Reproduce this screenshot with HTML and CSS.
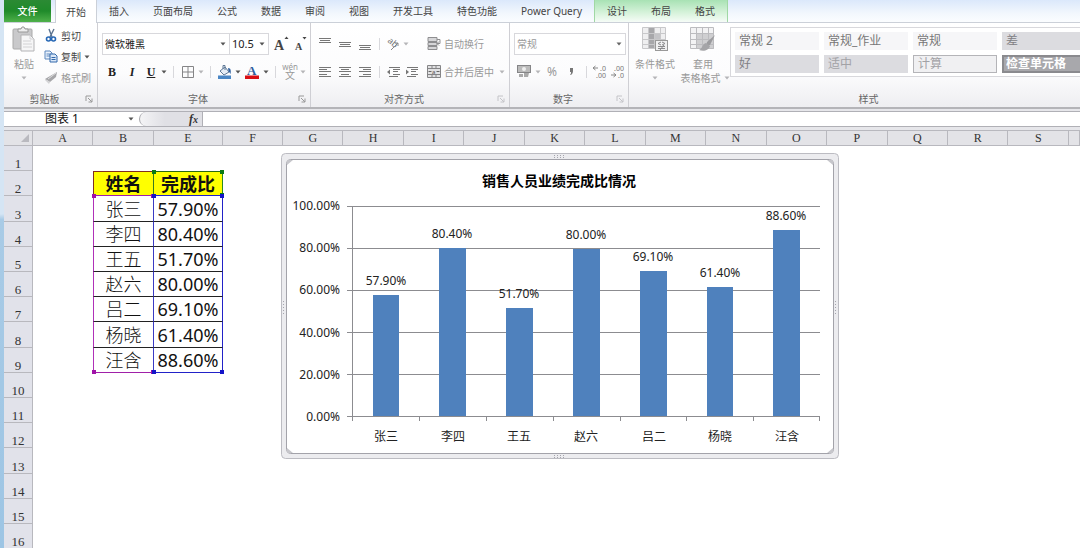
FILE: index.html
```html
<!DOCTYPE html>
<html lang="zh-CN">
<head>
<meta charset="utf-8">
<title>销售人员业绩完成比情况</title>
<link rel="stylesheet" href="styles.css">
</head>
<body>
<svg class="defs" aria-hidden="true">
  <symbol id="down" viewBox="0 0 6 4"><path d="M0.5 0.5h5L3 3.5z" fill="currentColor"/></symbol>
  <symbol id="launch" viewBox="0 0 8 8"><path d="M1 6V1h5" fill="none" stroke="currentColor"/><path d="M3 3l4 4M7 3.5V7H3.5" fill="none" stroke="currentColor"/></symbol>
</svg>
<div class="window">
  <nav class="tabs">
    <button class="tab file">文件</button>
    <button class="tab active">开始</button>
    <button class="tab">插入</button>
    <button class="tab">页面布局</button>
    <button class="tab">公式</button>
    <button class="tab">数据</button>
    <button class="tab">审阅</button>
    <button class="tab">视图</button>
    <button class="tab">开发工具</button>
    <button class="tab">特色功能</button>
    <button class="tab">Power Query</button>
    <div class="context">
      <button class="tab">设计</button>
      <button class="tab">布局</button>
      <button class="tab">格式</button>
    </div>
  </nav>

  <div class="ribbon">
    <section class="group clipboard">
      <div class="body">
        <button class="big off">
          <svg width="24" height="25" viewBox="0 0 24 25"><rect x="1" y="2" width="19" height="20" rx="1" fill="#c9c9cb" stroke="#aaa"/><path d="M6 5V2h3l1-2h2l1 2h3v3z" fill="#ededee" stroke="#999"/><path d="M9 8h9l4 4v12H9z" fill="#f6f6f7" stroke="#b3b3b5"/><path d="M18 8v4h4M11 14h8M11 17h9M11 20h9" fill="none" stroke="#d2d2d4"/></svg>
          <span>粘贴</span>
          <svg class="arr"><use href="#down"/></svg>
        </button>
        <div class="stack">
          <button class="line"><svg width="14" height="13" viewBox="0 0 14 13"><path d="M5 0l3 8M10 0L6 8" stroke="#5b7390" stroke-width="1.4"/><circle cx="4.500" cy="10" r="2" fill="none" stroke="#2667b5" stroke-width="1.600"/><circle cx="9.500" cy="10" r="2" fill="none" stroke="#2667b5" stroke-width="1.600"/></svg>剪切</button>
          <button class="line"><svg width="14" height="13" viewBox="0 0 14 13"><path d="M1 1h5l2 2v6H1z" fill="#eaf2fc" stroke="#5b86bd"/><path d="M2.500 4h4M2.500 6h4" stroke="#5b86bd"/><path d="M6 4h5l2 2v6H6z" fill="#dbe8f8" stroke="#3268ab"/><path d="M7.500 7.500h4M7.500 9.500h4" stroke="#3268ab"/></svg>复制<svg class="arr"><use href="#down"/></svg></button>
          <button class="line off"><svg width="14" height="13" viewBox="0 0 14 13"><path d="M13 1l-1 5-6 5-5-3z" fill="#a6a6a9"/><path d="M1 8l5 3-1 2-4-4z" fill="#d2d2d4"/><path d="M4 8l8-6" stroke="#dedee0"/></svg>格式刷</button>
        </div>
      </div>
      <footer><span>剪贴板</span><svg class="corner"><use href="#launch"/></svg></footer>
    </section>

    <section class="group font">
      <div class="body rows">
        <div class="row">
          <label class="pick family"><select aria-label="字体"><option>微软雅黑</option></select><svg class="arr"><use href="#down"/></svg></label>
          <label class="pick size"><select aria-label="字号"><option>10.5</option></select><svg class="arr"><use href="#down"/></svg></label>
          <button class="w18 grow" aria-label="增大字号"><svg width="16" height="16" viewBox="0 0 16 16"><text x="0" y="14" class="ga">A</text><path d="M10.500 3h4L12.500 0.500z" fill="#444"/></svg></button>
          <button class="w18" aria-label="减小字号"><svg width="16" height="16" viewBox="0 0 16 16"><text x="3" y="14" class="gb">A</text><path d="M10.500 1h4L12.500 3.500z" fill="#444"/></svg></button>
        </div>
        <div class="row">
          <button class="w20 serif"><b>B</b></button>
          <button class="w20 serif"><b><i>I</i></b></button>
          <button class="w18 serif"><b><u>U</u></b></button>
          <button class="w8" aria-label="下划线选项"><svg class="arr"><use href="#down"/></svg></button>
          <i class="sep"></i>
          <button class="w18" aria-label="边框"><svg width="12" height="12" viewBox="0 0 12 12"><path d="M.5.5h11v11H.5zM6 .5v11M.5 6h11" fill="none" stroke="#858587"/></svg></button>
          <button class="w8 off" aria-label="边框选项"><svg class="arr"><use href="#down"/></svg></button>
          <i class="sep"></i>
          <button class="w18" aria-label="填充颜色"><svg width="14" height="14" viewBox="0 0 14 14"><path d="M2 6l5-4 4 5-5 3z" fill="#e6edf6" stroke="#5f7896"/><path d="M5 4V0.500h2V5" fill="none" stroke="#5f7896"/><path d="M10 3c3 0 3 3 2.500 6L10.500 6z" fill="#2d5f9f"/><rect y="10.500" width="13" height="3.500" fill="#4a86c5"/></svg></button>
          <button class="w8" aria-label="填充选项"><svg class="arr"><use href="#down"/></svg></button>
          <button class="w20" aria-label="字体颜色"><svg width="14" height="14" viewBox="0 0 14 14"><text x="2" y="10" class="fc">A</text><rect y="10.500" width="14" height="3.500" fill="#d90f14"/></svg></button>
          <button class="w8" aria-label="字体颜色选项"><svg class="arr"><use href="#down"/></svg></button>
          <i class="sep"></i>
          <button class="w18 wen off" aria-label="拼音"><span class="py">wén</span><span>文</span></button>
          <button class="w8 off" aria-label="拼音选项"><svg class="arr"><use href="#down"/></svg></button>
        </div>
      </div>
      <footer><span>字体</span><svg class="corner"><use href="#launch"/></svg></footer>
    </section>

    <section class="group align">
      <div class="body">
        <div class="rows">
          <div class="row">
            <button class="w20" aria-label="顶端对齐"><svg width="12" height="12" viewBox="0 0 12 12"><path d="M0 .5h12M1 2.500h10M0 4.500h12" stroke="#777"/></svg></button>
            <button class="w20" aria-label="垂直居中"><svg width="12" height="12" viewBox="0 0 12 12"><path d="M0 4.500h12M1 6.500h10M0 8.500h12" stroke="#777"/></svg></button>
            <button class="w20" aria-label="底端对齐"><svg width="12" height="12" viewBox="0 0 12 12"><path d="M0 7.500h12M1 9.500h10M0 11.500h12" stroke="#777"/></svg></button>
            <i class="sep tight"></i>
            <button class="w18 off" aria-label="方向"><svg width="14" height="12" viewBox="0 0 14 12"><text x="0" y="6" class="ab" transform="rotate(40 4 6)">ab</text><path d="M5 12l7-7M12 8V5H9" fill="none" stroke="#888"/></svg></button>
            <button class="w8 off" aria-label="方向选项"><svg class="arr"><use href="#down"/></svg></button>
          </div>
          <div class="row">
            <button class="w20" aria-label="左对齐"><svg width="12" height="12" viewBox="0 0 12 12"><path d="M0 1.500h12M0 3.500h8M0 5.500h12M0 8.500h8M0 10.500h12" stroke="#777"/></svg></button>
            <button class="w20" aria-label="居中"><svg width="12" height="12" viewBox="0 0 12 12"><path d="M0 1.500h12M2 3.500h8M0 5.500h12M2 8.500h8M0 10.500h12" stroke="#777"/></svg></button>
            <button class="w20" aria-label="右对齐"><svg width="12" height="12" viewBox="0 0 12 12"><path d="M0 1.500h12M4 3.500h8M0 5.500h12M4 8.500h8M0 10.500h12" stroke="#777"/></svg></button>
            <i class="sep tight"></i>
            <button class="w18" aria-label="减少缩进"><svg width="13" height="12" viewBox="0 0 13 12"><path d="M2 1.500h11M6 3.500h7M6 5.500h5M6 8.500h7M2 10.500h9" stroke="#777"/><path d="M0 6l3-2.500v5z" fill="#777"/></svg></button>
            <button class="w18" aria-label="增加缩进"><svg width="13" height="12" viewBox="0 0 13 12"><path d="M2 1.500h11M6 3.500h7M6 5.500h5M6 8.500h7M2 10.500h9" stroke="#777"/><path d="M4 6L1 3.500v5z" fill="#777"/></svg></button>
          </div>
        </div>
        <div class="rows wraps">
          <button class="line row off"><svg width="14" height="13" viewBox="0 0 14 13"><path d="M1 .5h9v4H1zM1 5.500h9v3H1zM1 9.500h9v3H1z" fill="#d6d6d8" stroke="#8e8e90"/><path d="M10 2.500h3v4h-3M12 4.500l-2 2 2 2" fill="none" stroke="#8e8e90"/></svg>自动换行</button>
          <button class="line row off"><svg width="14" height="13" viewBox="0 0 14 13"><path d="M.5.5h13v12H.5zM.5 3.500h13M.5 9.500h13M5 .5v3M9 .5v3M5 9.500v3M9 9.500v3" fill="#e1e1e3" stroke="#858587"/><path d="M1.500 6.500h3M9.500 6.500h3" stroke="#666"/><text x="5" y="9" class="tiny">a</text></svg>合并后居中<svg class="arr"><use href="#down"/></svg></button>
        </div>
      </div>
      <footer><span>对齐方式</span><svg class="corner off"><use href="#launch"/></svg></footer>
    </section>

    <section class="group number">
      <div class="body rows">
        <div class="row">
          <label class="pick fmt off"><select aria-label="数字格式"><option>常规</option></select><svg class="arr"><use href="#down"/></svg></label>
        </div>
        <div class="row">
          <button class="w20" aria-label="会计数字格式"><svg width="14" height="13" viewBox="0 0 14 13"><rect x=".5" y=".5" width="13" height="7" fill="#bbb" stroke="#858587"/><circle cx="7" cy="4" r="2" fill="#eee"/><path d="M7 8h5l-1 4H7zM2 9h4v3H2z" fill="#aaa"/></svg></button>
          <button class="w8 off" aria-label="货币选项"><svg class="arr"><use href="#down"/></svg></button>
          <button class="w20 pct off">%</button>
          <button class="w20 off" aria-label="千位分隔样式"><svg width="4" height="7" viewBox="0 0 4 7"><path d="M0 0h3v3c0 2-1 3-2 4H0c1-1 1-2 1-3H0z" fill="#777"/></svg></button>
          <i class="sep tight"></i>
          <button class="w18" aria-label="增加小数位数"><svg width="14" height="13" viewBox="0 0 14 13"><path d="M0 3h5M2.500 1L0 3l2.500 2" fill="none" stroke="#888"/><text x="7" y="6" class="dec">.0</text><text x="3" y="13" class="dec">.00</text></svg></button>
          <button class="w18" aria-label="减少小数位数"><svg width="14" height="13" viewBox="0 0 14 13"><text x="3" y="6" class="dec">.00</text><path d="M0 10h5M2.500 8L5 10l-2.500 2" fill="none" stroke="#888"/><text x="7" y="13" class="dec">.0</text></svg></button>
        </div>
      </div>
      <footer><span>数字</span><svg class="corner off"><use href="#launch"/></svg></footer>
    </section>

    <section class="group styles">
      <div class="body">
        <button class="big off">
          <svg width="26" height="25" viewBox="0 0 26 25"><path d="M.5.500h23v21H.5z" fill="#efeff0"/><path d="M6 0h7v22H6z" fill="#a7a7aa"/><path d="M13 6h5v12h-5z" fill="#c4c4c7"/><path d="M.5.500h23v21H.5zM6.500 0v22M12.500 0v22M18.500 0v22M0 6.500h23M0 12.500h23M0 17.500h23" fill="none" stroke="#c8c8ca"/><rect x="13.500" y="13.500" width="12" height="10" fill="#f0f0f1" stroke="#999"/><path d="M19 15l-3 1.500 3 1.500M20 15l3 1.500-3 1.500M16 19.500h7M16 21.500h7M22 18l-4 5" fill="none" stroke="#8b8b8d"/></svg>
          <span>条件格式</span>
          <svg class="arr"><use href="#down"/></svg>
        </button>
        <button class="big off">
          <svg width="26" height="25" viewBox="0 0 26 25"><path d="M.5.500h23v21H.5z" fill="#f3f3f4"/><path d="M6 6h18v16H6z" fill="#cfcfd1"/><path d="M.5.500h23v21H.5zM6.500 0v22M12.500 0v22M18.500 0v22M0 6.500h23M0 12.500h23M0 17.500h23" fill="none" stroke="#bcbcbf"/><path d="M25 8l-5 10-4 1 1-4z" fill="#9c9c9f"/><path d="M16 16c-4 1-3 5-7 7 5 2 10 0 11-4z" fill="#a5a5a8"/></svg>
          <span>套用</span>
          <span class="two">表格格式<svg class="arr"><use href="#down"/></svg></span>
        </button>
        <div class="gallery">
          <button>常规 2</button><button>常规_作业</button><button>常规</button><button class="dim">差</button>
          <button class="dim">好</button><button class="dim pale">适中</button><button class="boxed pale">计算</button><button class="check">检查单元格</button>
        </div>
      </div>
      <footer><span>样式</span></footer>
    </section>
  </div>

  <div class="formula">
    <label class="namebox"><input value="图表 1" aria-label="名称框"><svg class="arr"><use href="#down"/></svg></label>
    <div class="fxbar"><div class="pill"><button class="fx" aria-label="插入函数">f<small>x</small></button></div></div>
    <input class="entry" aria-label="编辑栏">
  </div>

  <main class="sheet">
    <table>
      <colgroup><col class="c-head"><col class="c-a"><col class="c-b"><col class="c-e"><col class="c-a"><col><col><col><col><col><col><col><col><col><col><col><col><col><col class="c-end"></colgroup>
      <thead>
        <tr><th class="all"><svg width="8" height="8" viewBox="0 0 8 8"><path d="M8 0v8H0z" fill="#b9b9bf"/></svg></th><th>A</th><th>B</th><th>E</th><th>F</th><th>G</th><th>H</th><th>I</th><th>J</th><th>K</th><th>L</th><th>M</th><th>N</th><th>O</th><th>P</th><th>Q</th><th>R</th><th>S</th><th></th></tr>
      </thead>
      <tbody>
        <tr><th>1</th><td colspan="18"></td></tr>
        <tr><th>2</th><td></td><td class="name head">姓名</td><td class="rate head">完成比<i class="h tl green"></i><i class="h tr green"></i><i class="h br green"></i></td><td colspan="15"></td></tr>
        <tr class="tall"><th>3</th><td></td><td class="name">张三<i class="h tl purple"></i><i class="h tr purple"></i></td><td class="rate">57.90%<i class="h tl"></i><i class="h tr"></i></td><td colspan="15"></td></tr>
        <tr><th>4</th><td></td><td class="name">李四</td><td class="rate">80.40%</td><td colspan="15"></td></tr>
        <tr><th>5</th><td></td><td class="name">王五</td><td class="rate">51.70%</td><td colspan="15"></td></tr>
        <tr><th>6</th><td></td><td class="name">赵六</td><td class="rate">80.00%</td><td colspan="15"></td></tr>
        <tr><th>7</th><td></td><td class="name">吕二</td><td class="rate">69.10%</td><td colspan="15"></td></tr>
        <tr class="tall"><th>8</th><td></td><td class="name">杨晓</td><td class="rate">61.40%</td><td colspan="15"></td></tr>
        <tr class="last"><th>9</th><td></td><td class="name">汪含<i class="h bl purple"></i><i class="h br purple"></i></td><td class="rate">88.60%<i class="h bl"></i><i class="h br"></i></td><td colspan="15"></td></tr>
        <tr><th>10</th><td colspan="18"></td></tr>
        <tr><th>11</th><td colspan="18"></td></tr>
        <tr><th>12</th><td colspan="18"></td></tr>
        <tr class="tall"><th>13</th><td colspan="18"></td></tr>
        <tr><th>14</th><td colspan="18"></td></tr>
        <tr><th>15</th><td colspan="18"></td></tr>
        <tr><th>16</th><td colspan="18"></td></tr>
      </tbody>
    </table>

    <figure class="chart">
      <svg width="558" height="306" viewBox="0 0 558 306" role="img" aria-label="销售人员业绩完成比情况">
        <rect x=".5" y=".5" width="557" height="305" rx="4" fill="#ececef" stroke="#bcbcc2"/>
        <rect x="5.500" y="6.500" width="547" height="294" rx="4" fill="#fff" stroke="#a3a3aa"/>
        <path d="M6 12l6-5H6zM552 12l-6-5h6zM6 295l6 5H6zM552 295l-6 5h6z" fill="#c6c6cb"/>
        <g stroke="#a5a5ad" stroke-dasharray="1 2"><path d="M273 2.500h12M273 4.500h12M273 302.500h12M273 304.500h12M2.500 148v14M554.500 148v14"/></g>
        <text class="title" x="278" y="33">销售人员业绩完成比情况</text>
        <g class="grid"><path d="M66 53.500h473M66 95.500h473M66 137.500h473M66 179.500h473M66 221.500h473"/></g>
        <g class="ylab"><text x="59" y="57">100.00%</text><text x="59" y="99">80.00%</text><text x="59" y="141">60.00%</text><text x="59" y="184">40.00%</text><text x="59" y="226">20.00%</text><text x="59" y="268">0.00%</text></g>
        <g fill="#4f81bd"><rect x="92" y="142" width="26" height="122"/><rect x="158" y="95" width="27" height="169"/><rect x="225" y="155" width="27" height="109"/><rect x="292" y="96" width="27" height="168"/><rect x="359" y="118" width="27" height="146"/><rect x="426" y="134" width="26" height="130"/><rect x="492" y="77" width="27" height="187"/></g>
        <g class="grid"><path d="M66 263.500h473M71.500 53v215M138.500 264v4M205.500 264v4M272.500 264v4M339.500 264v4M405.500 264v4M472.500 264v4M538.500 264v4"/></g>
        <g class="lab"><text x="105" y="132">57.90%</text><text x="171" y="85">80.40%</text><text x="238" y="145">51.70%</text><text x="305" y="86">80.00%</text><text x="372" y="108">69.10%</text><text x="439" y="124">61.40%</text><text x="505" y="67">88.60%</text></g>
        <g class="lab"><text x="105" y="288">张三</text><text x="172" y="288">李四</text><text x="238" y="288">王五</text><text x="305" y="288">赵六</text><text x="373" y="288">吕二</text><text x="439" y="288">杨晓</text><text x="506" y="288">汪含</text></g>
      </svg>
    </figure>
  </main>
</div>
</body>
</html>
```
FILE: styles.css
```css
* { box-sizing: border-box; }
html, body { height: 100%; }
body {
  margin: 0;
  overflow: hidden;
  font: 10px/14px "Noto Sans", "Noto Sans CJK SC", sans-serif;
  color: #444;
  background: #fff;
}
button, select, input { font: inherit; color: inherit; border: 0; padding: 0; margin: 0; background: none; }
svg { display: block; flex: none; overflow: visible; }
.defs { position: absolute; width: 0; height: 0; }
.arr { width: 6px; height: 4px; color: #555; }
.off { color: #999; }
.off .arr { color: #b5b5b8; }

.window {
  min-height: 100%;
  display: flex;
  flex-direction: column;
  border-left: 4px solid;
  border-image: linear-gradient(#d5e5f4 0 39%, #a9cbe6 40%, #9dc5e4) 1;
}

/* tabs */
.tabs {
  display: flex;
  height: 23px;
  background: linear-gradient(#dbe8fb, #f2f7fd 60%, #fbfdff);
  border-bottom: 1px solid #cbd0d8;
}
.tab { padding: 0 12px; white-space: nowrap; height: 22px; }
.file { color: #fff; background: linear-gradient(#2b8a34, #1f8a2a 50%, #4fb14a); width: 47px; font-weight: 500; }
.active {
  width: 42px;
  height: 23px;
  margin-left: 4px;
  padding: 0;
  background: #fff;
  border: 1px solid #cbd0d8;
  border-width: 0 1px;
}
.context {
  display: flex;
  background: linear-gradient(#a8e2b4, #d8f3dc 60%, #f6fcf7);
  border: 1px solid #a0d8a4;
  border-width: 0 1px;
}
.context .tab { padding: 0 12px; }

/* ribbon */
.ribbon {
  display: flex;
  height: 86px;
  background: linear-gradient(#fff, #fcfcfd 60%, #eeeef1);
  border-bottom: 2px solid #b4b4b8;
  overflow: hidden;
}
.group { display: flex; flex-direction: column; flex: none; border-right: 1px solid #cfcfd4; }
.body { flex: 1; display: flex; }
.group footer { display: flex; height: 17px; align-items: center; color: #666; padding-right: 4px; }
.group footer span { flex: 1; text-align: center; }
.corner { width: 8px; height: 8px; color: #999; }
.corner.off { color: #c4c4c8; }
.clipboard { width: 94px; }
.font { width: 213px; }
.align { width: 199px; }
.number { width: 119px; }
.styles { flex: 1; border: 0; min-width: 0; }

.big { display: flex; flex-direction: column; align-items: center; padding-top: 4px; }
.big span { margin-top: 5px; white-space: nowrap; }
.big > .arr { margin-top: 5px; }
.big .two { display: flex; align-items: center; gap: 3px; margin: 0; padding-left: 4px; }
.clipboard .big { width: 40px; }
.stack { display: flex; flex-direction: column; padding-top: 2px; }
.line { display: flex; align-items: center; gap: 3px; height: 21px; white-space: nowrap; }

.rows { display: flex; flex-direction: column; gap: 7px; padding-top: 10px; }
.row { display: flex; align-items: center; height: 21px; }
.font .body { padding-left: 4px; }
.row button { display: flex; align-items: center; justify-content: center; height: 20px; }
.w20 { width: 20px; }
.w18 { width: 18px; }
.w8 { width: 8px; }
.sep { width: 1px; height: 12px; margin: 0 5px; background: #d8d8dc; }
.sep.tight { margin: 0 4px; }
.pick { display: flex; align-items: center; height: 22px; border: 1px solid #d8d8dc; background: #fff; padding-right: 3px; }
.pick select { appearance: none; flex: 1; min-width: 0; height: 20px; padding-left: 2px; outline: 0; }
.pick .arr { pointer-events: none; }
.family { width: 128px; color: #222; }
.size { width: 40px; color: #222; margin-left: -1px; }
.size select { font-size: 11px; }
.grow { margin-left: 4px; }
.serif { font: 12px/14px "Liberation Serif", serif; color: #222; }
.ga, .gb, .fc { font-family: "Liberation Serif", serif; font-weight: bold; fill: #444; }
.ga { font-size: 14px; }
.gb { font-size: 10px; }
.fc { font-size: 13px; fill: #2f5f9f; }
.row .wen { flex-direction: column; line-height: 11px; }
.wen .py { font-size: 8px; line-height: 7px; }
.ab { font-size: 9px; fill: #777; }
.tiny { font-size: 6px; fill: #555; }
.dec { font-size: 7px; fill: #777; }
.align .body { justify-content: space-between; }
.align .rows { padding-left: 4px; }
.align .wraps { width: 86px; padding: 10px 0 0 4px; }
.row.line { justify-content: flex-start; height: 21px; }
.wraps .arr { margin-left: 2px; }
.number .body { padding-left: 4px; }
.fmt { width: 112px; }
.pick.off .arr { color: #666; }
.pct { font-size: 12px; }

.styles .big { width: 48px; }
.styles .big:first-child { margin-left: 2px; }
.gallery {
  flex: 1;
  min-width: 0;
  display: grid;
  grid-template-columns: repeat(4, 84px);
  grid-template-rows: 18px 18px;
  gap: 5px;
  height: 50px;
  margin: 4px 0 0 3px;
  padding: 4px;
  border: 1px solid #d8d8dc;
  border-right: 0;
  background: #fff;
  overflow: hidden;
}
.gallery button { text-align: left; padding-left: 4px; font-size: 12px; line-height: 14px; color: #777; background: #f6f6f8; white-space: nowrap; }
.gallery .dim { background: #dcdce0; color: #808084; }
.gallery .pale { color: #a2a2a6; }
.gallery .boxed { background: #f0f0f2; border: 1px solid #b4b4b8; }
.gallery .check { background: #a8a8ac; color: #fff; border: 2px solid #8a8a8e; font-weight: bold; padding-left: 2px; line-height: 12px; }
.styles footer { padding: 0 0 0 28px; }

/* formula bar */
.formula { display: flex; height: 21px; padding: 2px 0 3px; background: #e6e6ea; }
.formula > * { border: 1px solid #b0b0b6; border-width: 1px 0; background: #fff; }
.namebox { display: flex; align-items: center; width: 134px; padding-right: 4px; }
.namebox input { flex: 1; min-width: 0; padding-left: 41px; font-size: 12px; color: #111; }
.fxbar { width: 65px; padding-left: 1px; }
.formula .fxbar { border-right-width: 1px; }
.pill {
  display: flex;
  justify-content: flex-end;
  align-items: center;
  height: 14px;
  padding-right: 4px;
  border-left: 1px solid #a4a4aa;
  border-radius: 8px 0 0 8px;
  background: linear-gradient(90deg, #f4f4f6, #e0e0e5 40%);
}
.fx { font: italic bold 12px/14px "Liberation Serif", serif; color: #333; }
.fx small { font-size: 10px; }
.entry { flex: 1; min-width: 0; }

/* worksheet */
.sheet { position: relative; flex: 1; }
table { width: 100%; table-layout: fixed; border-collapse: separate; border-spacing: 0; }
.c-head { width: 29px; }
.c-a { width: 60px; }
.c-b { width: 61px; }
.c-e { width: 69px; }
.c-end { width: 11px; }
th, td { padding: 0; }
th { font: 12px/14px "Liberation Serif", serif; color: #333; }
thead th { height: 16px; background: #e3e3e7; border: 1px solid #b8b8be; border-width: 1px 1px 1px 0; }
.all svg { margin: 0 3px 0 auto; }
tbody tr { height: 25px; }
tbody .tall { height: 26px; }
tbody th { vertical-align: bottom; background: #e1e2ea; border: 1px solid #b8b8be; border-width: 0 1px 1px 0; font-size: 13px; line-height: 12px; }
td { position: relative; font-size: 18px; line-height: 22px; text-align: center; color: #111; }
td.name, td.rate { border-bottom: 1px solid #222; white-space: nowrap; }
td.name { border-left: 1px solid #b030b8; border-right: 1px solid #3a3ac4; font-weight: 300; }
td.rate { border-right: 1px solid #2222c8; }
td.head { background: #ff0; font-weight: bold; border-top: 1px solid #2a6a10; }
td.name.head { border-color: #803020 #3a7a20 #a020a8 #803020; font-weight: bold; }
td.rate.head { border-right-color: #2a8a20; border-bottom-color: #2222c8; }
.last td.name { border-bottom-color: #a020a8; }
.last td.rate { border-bottom-color: #2222c8; }
.h { position: absolute; width: 4px; height: 4px; background: #1414c8; z-index: 1; }
.green { background: #0a7a14; }
.purple { background: #a012a8; }
.tl { left: -2px; top: -2px; }
.tr { right: -2px; top: -2px; }
.bl { left: -2px; bottom: -2px; }
.br { right: -2px; bottom: -2px; }

/* chart floats over the cells */
.chart { position: absolute; left: 277px; top: 23px; margin: 0; }
.chart text { font-size: 12px; fill: #222; }
.chart .title { font-size: 14px; font-weight: bold; text-anchor: middle; fill: #000; }
.ylab { text-anchor: end; }
.lab { text-anchor: middle; }
.grid { fill: none; stroke: #8c8c90; }
```
